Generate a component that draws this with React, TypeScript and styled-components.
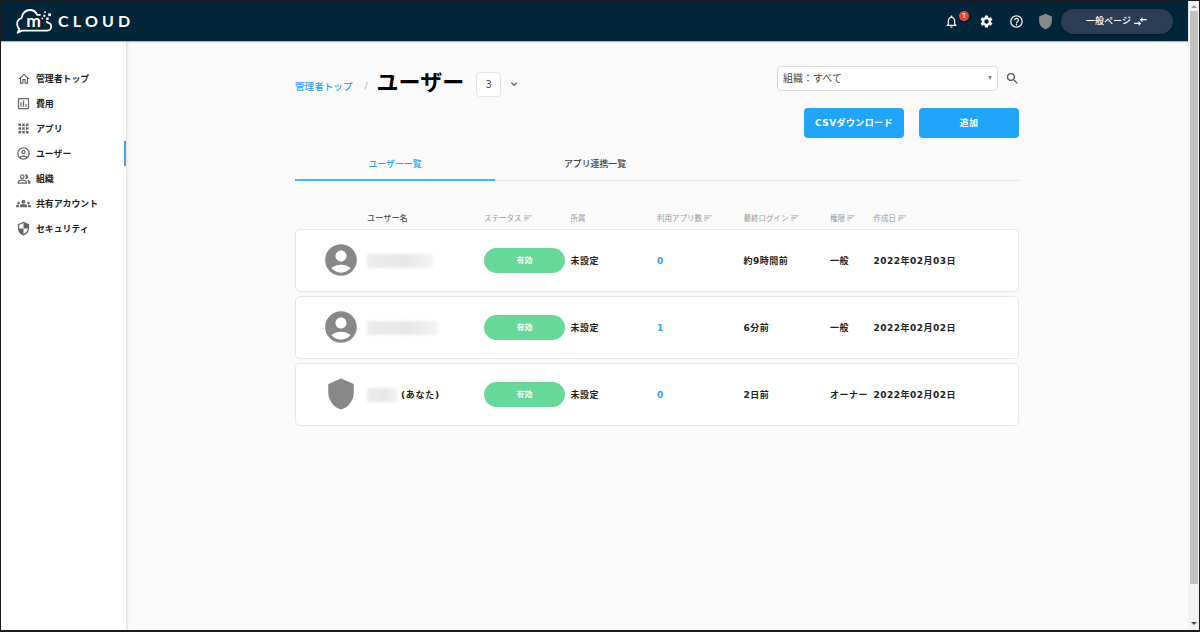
import React from 'react';
import styled, { createGlobalStyle } from 'styled-components';
import {
  MdOutlineHome, MdOutlineInsertChartOutlined, MdApps, MdOutlineAccountCircle, MdOutlinePeopleAlt, MdGroups,
  MdSecurity, MdNotificationsNone, MdSettings, MdHelpOutline, MdShield, MdCompareArrows,
  MdSort, MdSearch, MdKeyboardArrowDown, MdAccountCircle,
} from 'react-icons/md';

const GlobalStyle = createGlobalStyle`
  * { box-sizing: border-box; }
  body {
    margin: 0;
    background: #fafafa;
    font-family: "DejaVu Sans", "Noto Sans CJK JP", sans-serif;
    color: #222;
  }
  button { font-family: inherit; }
  svg { display: block; flex: none; }
`;

const Frame = styled.div`
  display: flex;
  width: 1200px;
  height: 632px;
  border: solid #1c1c1e;
  border-width: 1px 1px 2px 1px;
  background: #fafafa;
  overflow: hidden;
`;
const Page = styled.div`
  width: 1187px;
  display: flex;
  flex-direction: column;
`;
const Header = styled.header`
  position: relative;
  z-index: 1;
  height: 40px;
  flex: none;
  background: #02253a;
  display: flex;
  align-items: center;
  padding: 0 15px 0 14px;
  box-shadow: 0 1px 1px rgba(2, 37, 58, 0.3);
`;
const Wordmark = styled.span`
  font: 700 16px/20px Lato, sans-serif;
  letter-spacing: 4.2px;
  color: #fff;
  margin: -1px 0 0 5px;
`;
const HeaderTools = styled.div`
  margin-left: auto;
  display: flex;
  align-items: center;
  color: #f4f6f8;
`;
const Tool = styled.span<{ $w: number }>`
  position: relative;
  width: ${p => p.$w}px;
  display: flex;
  justify-content: center;
`;
const Badge = styled.span`
  position: absolute;
  top: -3px;
  left: 27px;
  width: 10px;
  height: 10px;
  border-radius: 50%;
  background: #f44336;
  color: #fff;
  font: 500 8px/10px Roboto, sans-serif;
  text-align: center;
`;
const ModeButton = styled.button`
  width: 112px;
  height: 25px;
  border: 0;
  border-radius: 13px;
  background: #2c3e55;
  color: #fff;
  font-size: 9px;
  font-weight: 500;
  display: flex;
  align-items: center;
  justify-content: center;
  gap: 2px;
  padding: 0 0 1px;
  box-shadow: 0 1px 3px rgba(0, 0, 0, 0.4);
  svg { margin-top: 2px; }
`;
const Body = styled.div`
  flex: 1;
  display: flex;
`;
const Sidebar = styled.nav`
  width: 126px;
  padding-top: 25px;
  background: #fff;
  border-right: 1px solid #e6e6e6;
  box-shadow: 1px 0 2px rgba(0, 0, 0, 0.06);
`;
const NavItem = styled.a<{ $active?: boolean }>`
  height: 25px;
  display: flex;
  align-items: center;
  padding-left: 15px;
  font-size: 8.9px;
  font-weight: 700;
  color: #222;
  border-right: 2px solid ${p => (p.$active ? '#4a9fe8' : 'transparent')};
`;
const NavIcon = styled.span`
  width: 15px;
  margin-right: 5px;
  display: flex;
  justify-content: center;
  color: #666;
`;
const Main = styled.main`
  width: 724px;
  margin-left: 168px;
  padding-top: 24px;
`;
const TitleBar = styled.div`
  display: flex;
  justify-content: space-between;
  height: 93px;
`;
const Crumbs = styled.div`
  display: flex;
  height: 38px;
  align-items: center;
`;
const CrumbLink = styled.a`
  font-size: 9.6px;
  font-weight: 500;
  color: #2ba2f8;
  margin-top: 3px;
`;
const Slash = styled.span`
  font-size: 9px;
  color: #aaa;
  margin: 4px 9px 0 12px;
`;
const Title = styled.h1`
  margin: 0 1px 2px 0;
  font-size: 22px;
  line-height: 32px;
  font-weight: 700;
  color: #000;
`;
const Count = styled.span`
  width: 25px;
  height: 25px;
  margin: 0 7px 0 11px;
  border: 1px solid #e4e4e4;
  border-radius: 4px;
  background: #fff;
  color: #555;
  font-size: 10px;
  line-height: 23px;
  text-align: center;
`;
const Actions = styled.div`
  display: flex;
  flex-direction: column;
  align-items: flex-end;
  padding-top: 1px;
  gap: 17px;
`;
const FilterRow = styled.div`
  display: flex;
  align-items: center;
  gap: 7px;
  margin-right: -1px;
  color: #555;
`;
const Select = styled.div`
  width: 221px;
  height: 25px;
  border: 1px solid #dcdcdc;
  border-radius: 4px;
  background: #fff;
  padding: 0 5px 2px;
  display: flex;
  align-items: center;
  justify-content: space-between;
  font-size: 10px;
  color: #444;
`;
const Caret = styled.i`
  border: solid transparent;
  border-width: 4px 2.5px 0;
  border-top-color: #888;
`;
const ButtonRow = styled.div`
  display: flex;
  gap: 15px;
`;
const PrimaryButton = styled.button`
  width: 100px;
  height: 30px;
  padding: 0 0 1px;
  border: 0;
  border-radius: 4px;
  background: #21a5fb;
  color: #fff;
  font-size: 9px;
  font-weight: 700;
  letter-spacing: 0.4px;
`;
const Tabs = styled.div`
  display: flex;
  height: 36px;
  margin-top: -13px;
  border-bottom: 1px solid #e4e4e4;
`;
const Tab = styled.div<{ $active?: boolean }>`
  width: 200px;
  height: 36px;
  line-height: 38px;
  text-align: center;
  font-size: 8.9px;
  font-weight: 500;
  color: ${p => (p.$active ? '#2ba2f8' : '#444')};
  border-bottom: 2px solid ${p => (p.$active ? '#4db4f8' : 'transparent')};
`;
const Grid = styled.div`
  display: grid;
  grid-template-columns: 71px 117px 86.5px 86.5px 86.5px 86.5px 43.5px 1fr;
  align-items: center;
`;
const HeadRow = styled(Grid)`
  height: 20px;
  margin: 26px 0 2px 1px;
`;
const HeadCell = styled.span<{ $strong?: boolean }>`
  display: flex;
  align-items: center;
  gap: 1px;
  white-space: nowrap;
  font-size: ${p => (p.$strong ? '8.2px' : '7.5px')};
  font-weight: ${p => (p.$strong ? 500 : 400)};
  color: ${p => (p.$strong ? '#555' : '#999')};
  svg { margin-top: 1px; }
`;
const Card = styled(Grid)`
  height: 63px;
  margin-bottom: 4.2px;
  border: 1px solid #e6e6e6;
  border-radius: 5px;
  background: #fff;
  font-size: 9px;
  font-weight: 700;
  letter-spacing: 0.5px;
  white-space: nowrap;
`;
const Avatar = styled.span`
  width: 89px;
  display: flex;
  justify-content: center;
  color: #888;
  margin-top: -1px;
`;
const Name = styled.span`
  display: flex;
  align-items: center;
  letter-spacing: 0.75px;
`;
const Redacted = styled.span<{ $w: number }>`
  width: ${p => p.$w}px;
  height: 14px;
  background: linear-gradient(90deg, #ececec, #e7e7e7 60%, #f4f4f4);
  filter: blur(1.5px);
  margin-right: 3px;
`;
const Pill = styled.span`
  width: 81px;
  height: 25px;
  border-radius: 13px;
  background: #67d898;
  color: #fff;
  font-size: 8px;
  letter-spacing: 0;
  line-height: 25px;
  text-align: center;
`;
const AppCount = styled.span`
  color: #2ba2f8;
`;
const Scrollbar = styled.div`
  width: 11px;
  background: #f3f3f3;
  display: flex;
  flex-direction: column;
  align-items: center;
  justify-content: space-between;
  padding: 4px 0 5px;
`;
const Thumb = styled.div`
  width: 8px;
  height: 573px;
  margin: 3px 0 auto;
  background: #c1c1c1;
`;
const Arrow = styled.i<{ $down?: boolean }>`
  border: solid transparent;
  border-width: ${p => (p.$down ? '3px 3px 0' : '0 3px 3px')};
  border-top-color: ${p => (p.$down ? '#505050' : 'transparent')};
  border-bottom-color: ${p => (p.$down ? 'transparent' : '#999')};
`;

const LogoMark = () => (
  <svg width="38" height="26" viewBox="15 7 38 26" fill="none" stroke="#fff" strokeWidth="1.8" strokeLinecap="round" strokeLinejoin="round">
    <path d="M40 13.8H37.2C35.8 10.8 33.2 9 30 9C25.5 9 22 12.3 21.6 17C18.5 18 16.8 20.5 17.2 23.8C17.5 26 18.6 27.3 19.4 28L17.6 31.8L22 29.6H47C49.5 29.6 51.2 27.8 51.2 25.7C51.2 23.5 50 22 47.6 21.6" />
    <text x="26.2" y="26" fill="#fff" stroke="none" fontFamily="Lato" fontWeight="700" fontSize="17.5">m</text>
    <g fill="#fff" stroke="none">
      <circle cx="45" cy="11.2" r="0.9" />
      <rect x="48.3" y="12.4" width="2.7" height="2.7" />
      <rect x="43.3" y="13.8" width="2" height="2" />
      <rect x="46.2" y="16.5" width="2.4" height="2.4" />
      <circle cx="42.3" cy="17.4" r="0.9" />
      <circle cx="46.8" cy="20.7" r="0.9" />
    </g>
  </svg>
);

const navItems = [
  { label: '管理者トップ', Icon: MdOutlineHome, size: 14 },
  { label: '費用', Icon: MdOutlineInsertChartOutlined, size: 15 },
  { label: 'アプリ', Icon: MdApps, size: 15 },
  { label: 'ユーザー', Icon: MdOutlineAccountCircle, size: 15, active: true },
  { label: '組織', Icon: MdOutlinePeopleAlt, size: 14 },
  { label: '共有アカウント', Icon: MdGroups, size: 15 },
  { label: 'セキュリティ', Icon: MdSecurity, size: 15 },
];

const columns = [
  { label: '' },
  { label: 'ユーザー名', strong: true },
  { label: 'ステータス', sort: true },
  { label: '所属' },
  { label: '利用アプリ数', sort: true },
  { label: '最終ログイン', sort: true },
  { label: '権限', sort: true },
  { label: '作成日', sort: true },
];

const users = [
  { width: 66, apps: 0, login: '約9時間前', role: '一般', created: '2022年02月03日' },
  { width: 71, apps: 1, login: '6分前', role: '一般', created: '2022年02月02日' },
  { width: 31, apps: 0, login: '2日前', role: 'オーナー', created: '2022年02月02日', self: true },
];

export default function App() {
  return (
    <>
      <GlobalStyle />
      <Frame>
        <Page>
          <Header>
            <LogoMark />
            <Wordmark>CLOUD</Wordmark>
            <HeaderTools>
              <Tool $w={38}><MdNotificationsNone size={15} /><Badge>1</Badge></Tool>
              <Tool $w={32}><MdSettings size={15} /></Tool>
              <Tool $w={28}><MdHelpOutline size={15} /></Tool>
              <Tool $w={31}><MdShield size={17} color="#888" /></Tool>
              <ModeButton>一般ページ<MdCompareArrows size={15} /></ModeButton>
            </HeaderTools>
          </Header>
          <Body>
            <Sidebar>
              {navItems.map(({ label, Icon, size, active }) => (
                <NavItem key={label} $active={active}>
                  <NavIcon><Icon size={size} /></NavIcon>
                  {label}
                </NavItem>
              ))}
            </Sidebar>
            <Main>
              <TitleBar>
                <Crumbs>
                  <CrumbLink>管理者トップ</CrumbLink>
                  <Slash>/</Slash>
                  <Title>ユーザー</Title>
                  <Count>3</Count>
                  <MdKeyboardArrowDown size={12} color="#444" />
                </Crumbs>
                <Actions>
                  <FilterRow>
                    <Select>組織：すべて<Caret /></Select>
                    <MdSearch size={15} />
                  </FilterRow>
                  <ButtonRow>
                    <PrimaryButton>CSVダウンロード</PrimaryButton>
                    <PrimaryButton>追加</PrimaryButton>
                  </ButtonRow>
                </Actions>
              </TitleBar>
              <Tabs>
                <Tab $active>ユーザー一覧</Tab>
                <Tab>アプリ連携一覧</Tab>
              </Tabs>
              <HeadRow>
                {columns.map(c => (
                  <HeadCell key={c.label} $strong={c.strong}>
                    {c.label}
                    {c.sort && <MdSort size={10} />}
                  </HeadCell>
                ))}
              </HeadRow>
              {users.map((u, i) => (
                <Card key={i}>
                  <Avatar>{u.self ? <MdShield size={34} /> : <MdAccountCircle size={38} />}</Avatar>
                  <Name><Redacted $w={u.width} />{u.self && '(あなた)'}</Name>
                  <Pill>有効</Pill>
                  <span>未設定</span>
                  <AppCount>{u.apps}</AppCount>
                  <span>{u.login}</span>
                  <span>{u.role}</span>
                  <span>{u.created}</span>
                </Card>
              ))}
            </Main>
          </Body>
        </Page>
        <Scrollbar>
          <Arrow />
          <Thumb />
          <Arrow $down />
        </Scrollbar>
      </Frame>
    </>
  );
}
